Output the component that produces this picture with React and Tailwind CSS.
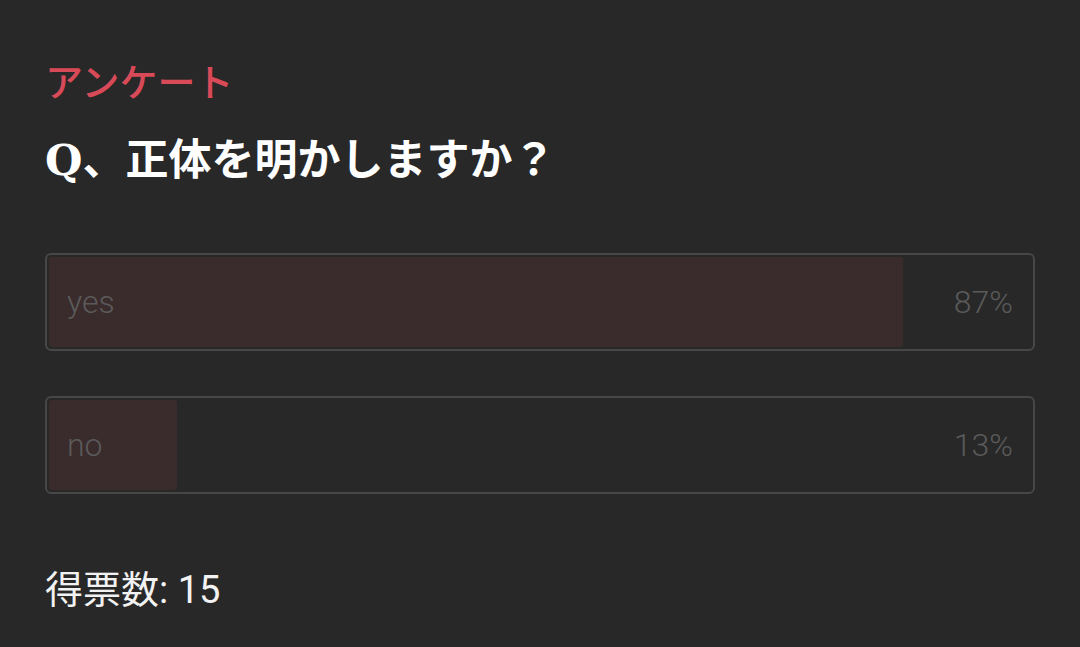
import React from 'react';

const options = [
  { label: 'yes', pct: 87 },
  { label: 'no', pct: 13 },
];

export default function App() {
  return (
    <div
      className="w-[1080px] h-[647px] bg-[#282828] px-[45px] pt-[56px] overflow-hidden"
      style={{ fontFamily: 'Roboto, "Noto Sans CJK JP", sans-serif' }}
    >
      {/* 見出し */}
      <div className="text-[38px] leading-[54px] font-medium text-[#d94a59]">アンケート</div>
      <div className="mt-[20px] text-[43px] leading-[60px] font-bold text-white">
        <span style={{ fontFamily: '"DejaVu Serif", serif' }}>Q</span>、正体を明かしますか？
      </div>

      {/* 選択肢 */}
      <div className="mt-[63px] flex flex-col gap-[45px]">
        {options.map((o) => (
          <div
            key={o.label}
            className="h-[98px] w-[990px] rounded-[6px] border-2 border-[#474747] p-[2px] flex"
          >
            <div className="flex-1 relative">
              <div
                className="h-full rounded-[3px] bg-[#3a2b2c]"
                style={{ width: `${o.pct}%` }}
              />
              <div className="absolute inset-0 flex items-center justify-between pl-[18px] pr-[18px] text-[32px] font-light text-[#5a5a5a]">
                <span>{o.label}</span>
                <span>{o.pct}%</span>
              </div>
            </div>
          </div>
        ))}
      </div>

      <div className="mt-[70px] text-[38px] leading-[52px] text-[#f2f2f2]">得票数: 15</div>
    </div>
  );
}
